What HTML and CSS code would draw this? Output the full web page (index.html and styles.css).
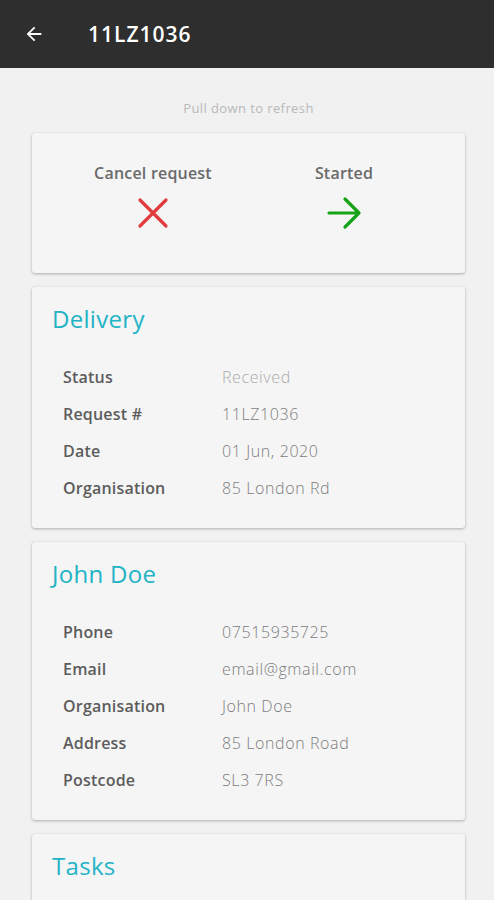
FILE: index.html
```html
<!DOCTYPE html>
<html>
<head>
<meta charset="utf-8">
<link rel="stylesheet" href="styles.css">
</head>
<body>
<header class="appbar">
  <svg class="back" width="22" height="22" viewBox="0 0 24 24"><path d="M20 11H7.83l5.59-5.59L12 4l-8 8 8 8 1.41-1.41L7.83 13H20v-2z" fill="#fff"/></svg>
  <h1 class="title">11LZ1036</h1>
</header>
<main class="content">
  <p class="refresh">Pull down to refresh</p>
  <section class="card actions">
    <div class="action">
      <span class="action-label">Cancel request</span>
      <svg width="36" height="36" viewBox="0 0 36 36"><path d="M5 5L31 31M31 5L5 31" stroke="#e23b3b" stroke-width="3.2" stroke-linecap="round"/></svg>
    </div>
    <div class="action">
      <span class="action-label">Started</span>
      <svg width="36" height="36" viewBox="0 0 36 36"><path d="M3 18H33M19 4L33 18L19 32" stroke="#17a317" stroke-width="3.2" fill="none" stroke-linecap="round" stroke-linejoin="round"/></svg>
    </div>
  </section>
  <section class="card">
    <h2 class="card-title">Delivery</h2>
    <dl class="rows">
      <dt>Status</dt><dd class="muted">Received</dd>
      <dt>Request #</dt><dd>11LZ1036</dd>
      <dt>Date</dt><dd>01 Jun, 2020</dd>
      <dt>Organisation</dt><dd>85 London Rd</dd>
    </dl>
  </section>
  <section class="card">
    <h2 class="card-title">John Doe</h2>
    <dl class="rows">
      <dt>Phone</dt><dd>07515935725</dd>
      <dt>Email</dt><dd>email@gmail.com</dd>
      <dt>Organisation</dt><dd>John Doe</dd>
      <dt>Address</dt><dd>85 London Road</dd>
      <dt>Postcode</dt><dd>SL3 7RS</dd>
    </dl>
  </section>
  <section class="card">
    <h2 class="card-title">Tasks</h2>
    <div class="spacer"></div>
  </section>
</main>
</body>
</html>
```
FILE: styles.css
```css
* { box-sizing: border-box; }
html, body { margin: 0; padding: 0; }
body {
  background: #f1f1f1;
  font-family: "Open Sans", Lato, sans-serif;
  width: 494px;
  height: 900px;
  overflow: hidden;
}
.appbar {
  height: 68px;
  background: #2e2e2e;
  display: flex;
  align-items: center;
  padding-left: 23px;
}
.back { flex: none; }
.title {
  margin: 0 0 0 43px;
  color: #fff;
  font-size: 21px;
  font-weight: 600;
  letter-spacing: 1px;
}
.content {
  padding: 0 29px 0 32px;
  display: flex;
  flex-direction: column;
  gap: 14px;
}
.refresh {
  margin: 31px 0 0;
  text-align: center;
  font-size: 13px;
  letter-spacing: 0.4px;
  color: #b9b9b9;
  height: 18px;
  line-height: 18px;
  margin-bottom: 2px;
}
.card {
  background: #f5f5f5;
  border-radius: 3px;
  box-shadow: 0 1px 3px rgba(0,0,0,0.28), 0 0 1px rgba(0,0,0,0.08);
}
.actions {
  height: 140px;
  display: grid;
  grid-template-columns: 191px 191px;
  justify-content: center;
  padding-top: 30px;
}
.action {
  display: flex;
  flex-direction: column;
  align-items: center;
  gap: 12px;
}
.action-label {
  font-size: 16px;
  font-weight: 600;
  letter-spacing: 0.2px;
  color: #6a6a6a;
  line-height: 20px;
}
.card-title {
  margin: 0;
  padding: 16px 0 0 20px;
  font-size: 24px;
  font-weight: 400;
  letter-spacing: 0.3px;
  color: #22b3c6;
  line-height: 32px;
}
.rows {
  margin: 0;
  padding: 23px 0 22px 31px;
  display: grid;
  grid-template-columns: 159px 1fr;
  grid-auto-rows: 37px;
  align-items: center;
}
.rows dt {
  font-size: 16px;
  font-weight: 600;
  letter-spacing: 0.2px;
  color: #5c5c5c;
}
.rows dd {
  margin: 0;
  font-size: 16px;
  font-weight: 300;
  letter-spacing: 0.6px;
  color: #7c7c7c;
}
.rows dd.muted { color: #ababab; }
.spacer { height: 40px; }
```
